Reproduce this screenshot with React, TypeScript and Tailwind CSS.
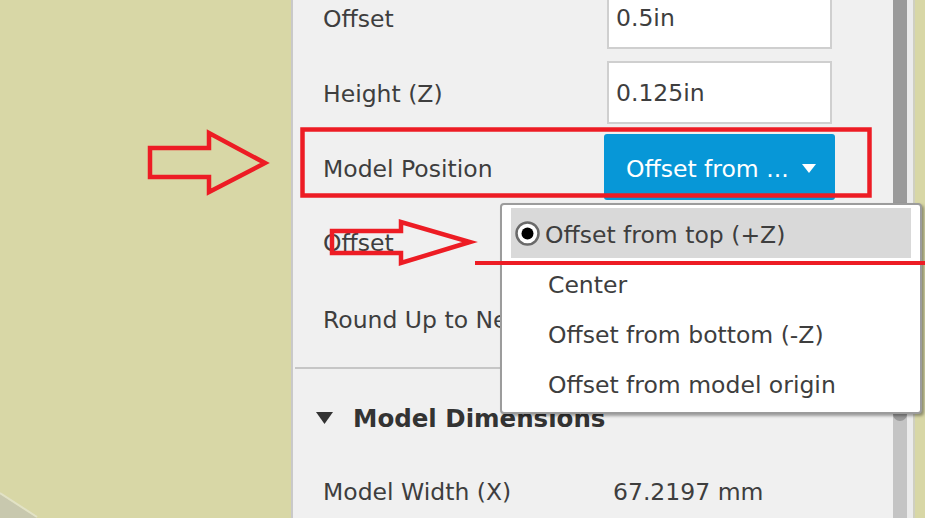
import React from "react";

const label = "pt-[5px] text-[23.5px] text-[#3e3e3e] whitespace-nowrap leading-none";

function Input({ value }: { value: string }) {
  return (
    <div className="w-[225px] h-full border-2 border-[#cfcfcf] bg-white pl-[7px] flex items-center">
      <span className="pt-[2px] text-[23.5px] text-[#3e3e3e] whitespace-nowrap leading-none">{value}</span>
    </div>
  );
}

export default function App() {
  return (
    <div className="relative w-[925px] h-[518px] overflow-hidden flex bg-[#d8d7a6] font-['DejaVu_Sans',sans-serif]">
      {/* 3D canvas */}
      <div className="relative w-[291px] h-full bg-[#d8d7a6]">
        <svg className="absolute left-0 bottom-0" width="40" height="26" viewBox="0 0 40 26">
          <polygon points="0,2 37,26 0,26" fill="#c8c8ae" />
          <line x1="0" y1="1" x2="37" y2="25" stroke="#e2e2c6" strokeWidth="2" />
        </svg>
      </div>

      {/* Panel */}
      <div className="relative w-[602px] h-full border-l-2 border-[#c9c9c9] bg-[#f0f0f0] flex flex-col">
        <div className="mt-[-14px] pl-[30px] flex flex-col">
          <div className="h-[63px] flex items-center">
            <div className="w-[284px]"><div className={label}>Offset</div></div>
            <Input value="0.5in" />
          </div>
          <div className="mt-[12px] h-[63px] flex items-center">
            <div className="w-[284px]"><div className={label}>Height (Z)</div></div>
            <Input value="0.125in" />
          </div>
          <div className="mt-[10px] h-[66px] flex items-center">
            <div className="w-[284px]"><div className={label}>Model Position</div></div>
            <div className="ml-[-3px] w-[231px] h-full rounded-[3px] bg-[#0797d7] pl-[22px] flex items-center">
              <span className="pt-[5px] text-[23.5px] text-white whitespace-nowrap leading-none">Offset from ...</span>
              <svg className="ml-[13px] mt-[3px]" width="14" height="9" viewBox="0 0 14 9">
                <polygon points="0,0 14,0 7,9" fill="#ffffff" />
              </svg>
            </div>
          </div>
          <div className="mt-[10px] h-[63px] flex items-center">
            <div className="w-[284px]"><div className={label}>Offset</div></div>
            <div className="w-[225px] h-full border-2 border-[#cfcfcf] bg-white" />
          </div>
          <div className="mt-[14px] h-[63px] flex items-center">
            <div className={label}>Round Up to Nearest</div>
          </div>
        </div>
        <div className="mt-[17px] ml-[2px] h-[2px] bg-[#c6c6c6]" />
        <div className="h-[50px] mt-[26px] pl-[23px] flex items-center">
          <svg className="mt-[2px]" width="17" height="12" viewBox="0 0 17 12">
            <polygon points="0,0 17,0 8.5,12" fill="#333333" />
          </svg>
          <span className="ml-[20px] pt-[5px] text-[24.5px] font-bold text-[#333333] whitespace-nowrap leading-none">Model Dimensions</span>
        </div>
        <div className="mt-[22px] h-[63px] pl-[30px] flex items-center">
          <div className="w-[290px]"><div className={label}>Model Width (X)</div></div>
          <div className={label}>67.2197 mm</div>
        </div>
      </div>

      {/* Scrollbar */}
      <div className="w-[14px] h-full bg-[#c4c4c4] flex flex-col">
        <div className="h-[421px] bg-[#9a9a9a] rounded-b-[7px]" />
      </div>
      <div className="w-[6px] h-full bg-[#ebebeb]" />
      <div className="w-[2px] h-full bg-[#cfcfc0]" />
      <div className="flex-1 h-full bg-[#d8d7a6]" />

      {/* Dropdown popup */}
      <div className="absolute left-[500px] top-[203px] w-[422px] h-[211px] bg-white border-2 border-[#9c9c9c] rounded-[4px] shadow-[2px_2px_3px_rgba(0,0,0,0.35)] px-[9px] pt-[3px] flex flex-col">
        <div className="h-[50px] bg-[#d9d9d9] flex items-center pl-[3px]">
          <svg width="27" height="27" viewBox="0 0 27 27">
            <circle cx="13.5" cy="13.5" r="11" fill="#ffffff" stroke="#6a6a6a" strokeWidth="2.5" />
            <circle cx="13.5" cy="13.5" r="6" fill="#000000" />
          </svg>
          <div className={label + " ml-[4px]"}>Offset from top (+Z)</div>
        </div>
        <div className="h-[50px] flex items-center pl-[37px]">
          <div className={label}>Center</div>
        </div>
        <div className="h-[50px] flex items-center pl-[37px]">
          <div className={label}>Offset from bottom (-Z)</div>
        </div>
        <div className="h-[50px] flex items-center pl-[37px]">
          <div className={label}>Offset from model origin</div>
        </div>
      </div>

      {/* Red annotations */}
      <svg className="absolute left-0 top-0 pointer-events-none" width="925" height="518" viewBox="0 0 925 518">
        <g fill="none" stroke="#ed1c24" strokeWidth="4.5" strokeLinejoin="miter">
          <polygon points="150,148 209,148 209,133 265,163 209,192 209,177 150,177" />
          <rect x="302.5" y="129.5" width="567" height="66" />
          <polygon points="332,231 401,231 401,222 470,242 401,263 401,253 332,253" />
        </g>
        <line x1="475" y1="263" x2="925" y2="263" stroke="#ed1c24" strokeWidth="4" />
      </svg>
    </div>
  );
}
